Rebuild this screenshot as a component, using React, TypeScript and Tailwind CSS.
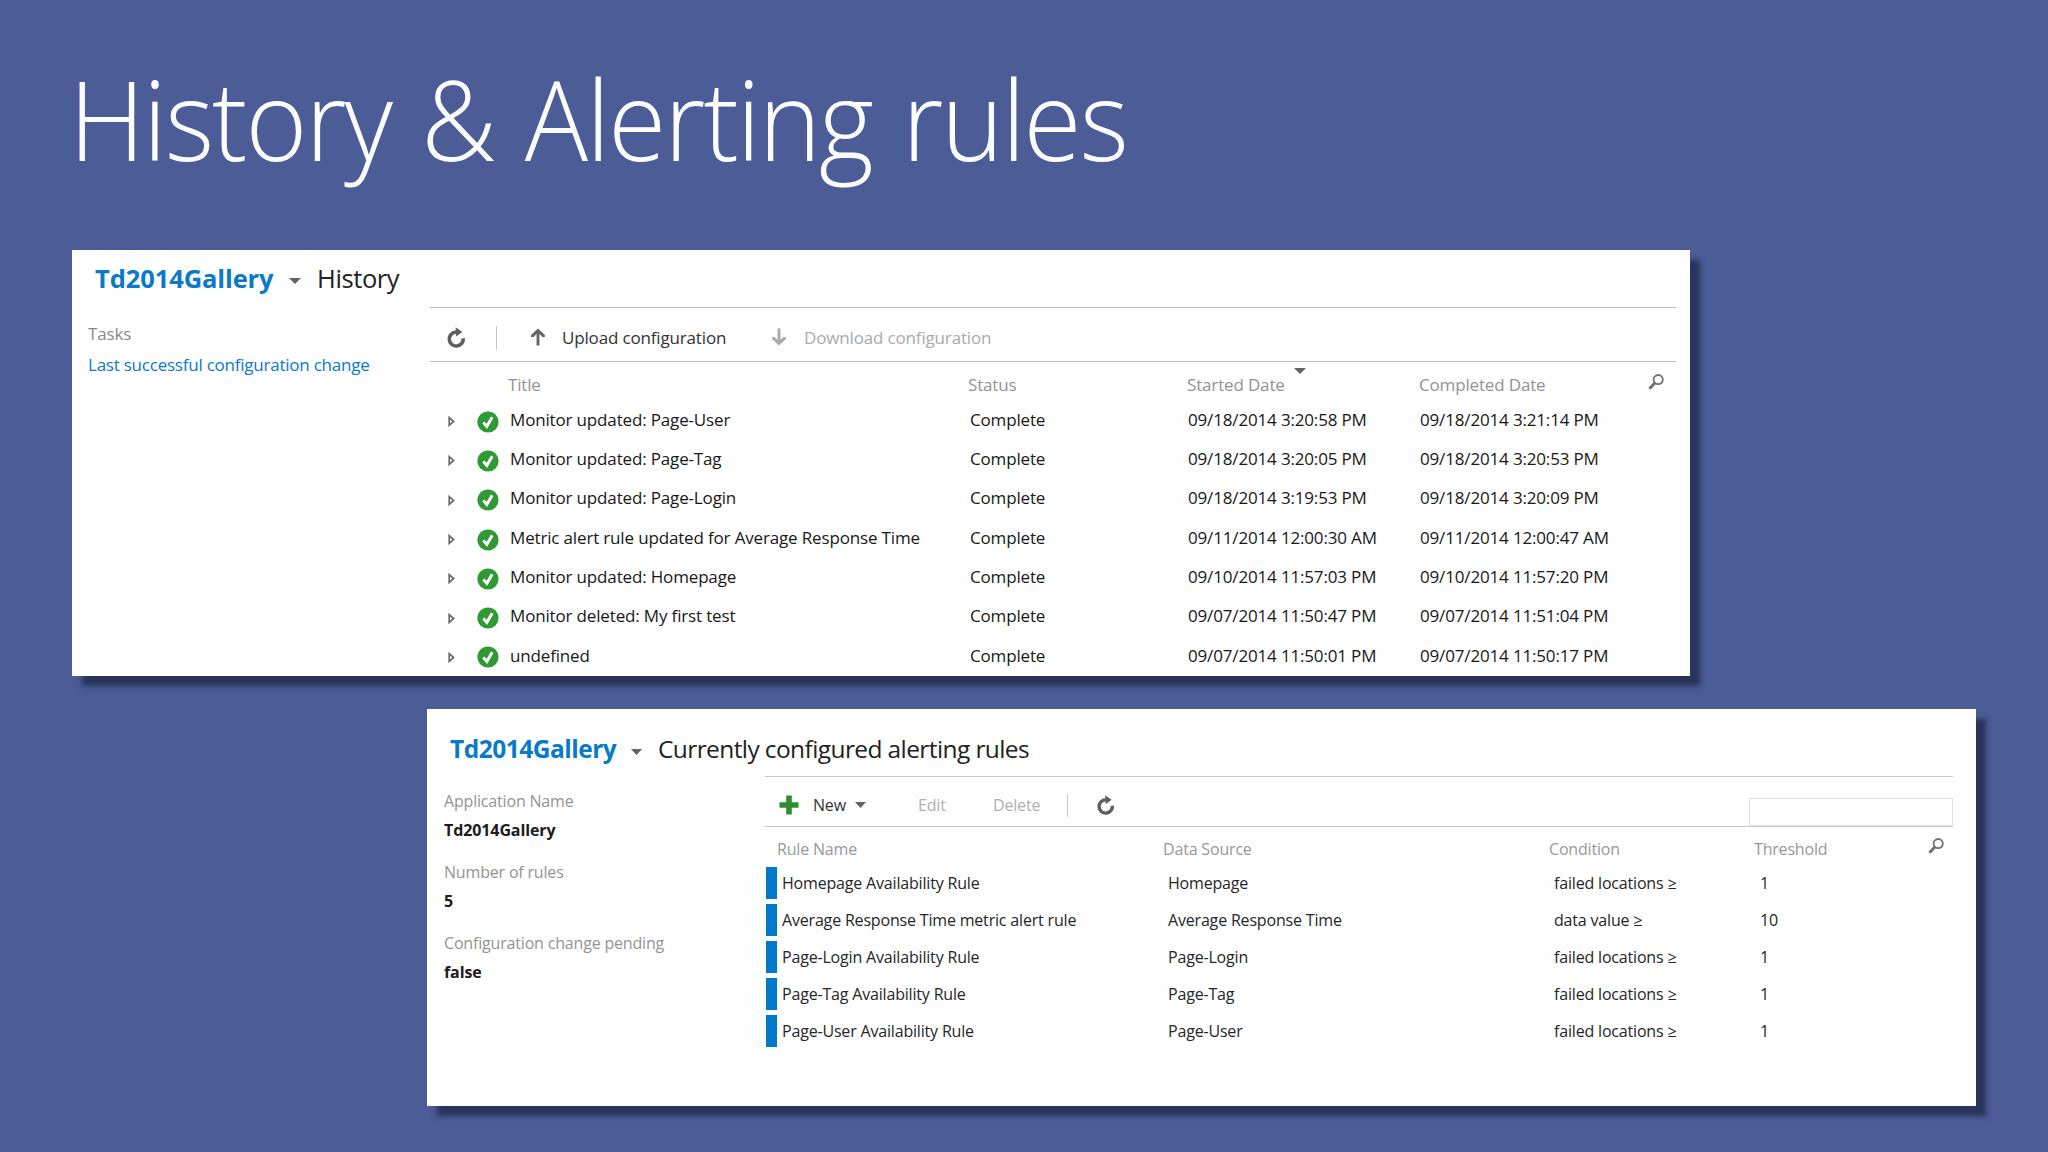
import type { ReactNode } from "react";
import clsx from "clsx";

const historyRows = [
  { title: "Monitor updated: Page-User", started: "09/18/2014 3:20:58 PM", completed: "09/18/2014 3:21:14 PM" },
  { title: "Monitor updated: Page-Tag", started: "09/18/2014 3:20:05 PM", completed: "09/18/2014 3:20:53 PM" },
  { title: "Monitor updated: Page-Login", started: "09/18/2014 3:19:53 PM", completed: "09/18/2014 3:20:09 PM" },
  { title: "Metric alert rule updated for Average Response Time", started: "09/11/2014 12:00:30 AM", completed: "09/11/2014 12:00:47 AM" },
  { title: "Monitor updated: Homepage", started: "09/10/2014 11:57:03 PM", completed: "09/10/2014 11:57:20 PM" },
  { title: "Monitor deleted: My first test", started: "09/07/2014 11:50:47 PM", completed: "09/07/2014 11:51:04 PM" },
  { title: "undefined", started: "09/07/2014 11:50:01 PM", completed: "09/07/2014 11:50:17 PM" },
];

const rules = [
  { name: "Homepage Availability Rule", source: "Homepage", condition: "failed locations ≥", threshold: "1" },
  { name: "Average Response Time metric alert rule", source: "Average Response Time", condition: "data value ≥", threshold: "10" },
  { name: "Page-Login Availability Rule", source: "Page-Login", condition: "failed locations ≥", threshold: "1" },
  { name: "Page-Tag Availability Rule", source: "Page-Tag", condition: "failed locations ≥", threshold: "1" },
  { name: "Page-User Availability Rule", source: "Page-User", condition: "failed locations ≥", threshold: "1" },
];

const summary = [
  { label: "Application Name", value: "Td2014Gallery" },
  { label: "Number of rules", value: "5" },
  { label: "Configuration change pending", value: "false" },
];

interface IconProps {
  className?: string;
}

function RefreshIcon({ className }: IconProps) {
  return (
    <svg viewBox="0 0 20 22" className={className} fill="none">
      <path d="M10.2 5A7 7 0 1 0 17.2 11.2" stroke="#5e5e5e" strokeWidth="3.6" />
      <path d="M9.6 0.2 16.4 5 10.2 9.6Z" fill="#5e5e5e" />
    </svg>
  );
}

function ArrowIcon({ className }: IconProps) {
  return (
    <svg viewBox="0 0 14 18" className={className} fill="none" stroke="currentColor">
      <path d="M7 17.5V2.5" strokeWidth="2.9" />
      <path d="M1.6 9V7.6L7 2.6l5.4 5V9" strokeWidth="3" />
    </svg>
  );
}

function SearchIcon({ className }: IconProps) {
  return (
    <svg viewBox="0 0 16 16" className={className} fill="none" stroke="#707070">
      <circle cx="10.2" cy="5.6" r="4.6" strokeWidth="1.8" />
      <path d="M6.8 9 1.4 14.8" strokeWidth="2.8" />
    </svg>
  );
}

function Caret({ className }: IconProps) {
  return (
    <svg viewBox="0 0 12 6" preserveAspectRatio="none" className={className}>
      <path d="M0 0h12L6 6z" fill="#636363" />
    </svg>
  );
}

function ExpandIcon({ className }: IconProps) {
  return (
    <svg viewBox="0 0 7 11" className={className} fill="none">
      <path d="M1.2 1.6v7.8L5.6 5.5z" stroke="#6a6a6a" strokeWidth="1.7" />
    </svg>
  );
}

function CheckIcon({ className }: IconProps) {
  return (
    <svg viewBox="0 0 22 22" className={className} fill="none">
      <circle cx="11" cy="11" r="10.6" fill="#2f9a34" />
      <path d="M6.4 11.4 9.8 15.4 15.2 6.2" stroke="#fff" strokeWidth="3" />
    </svg>
  );
}

function PlusIcon({ className }: IconProps) {
  return (
    <svg viewBox="0 0 20 20" className={className}>
      <path d="M7.2 0.5h5.6v6.7h6.7v5.6h-6.7v6.7H7.2v-6.7H0.5V7.2h6.7z" fill="#2f8d2f" />
    </svg>
  );
}

interface PanelProps {
  className: string;
  children: ReactNode;
}

function Panel({ className, children }: PanelProps) {
  return (
    <section className={clsx("bg-[#fefefe] shadow-[10px_10px_5px_0px_rgba(38,49,86,0.92)]", className)}>
      {children}
    </section>
  );
}

function HistoryPanel() {
  return (
    <Panel className="ml-[72px] h-[426px] w-[1618px] text-[17px] tracking-[-0.16px]">
      <header className="flex h-[57px] items-center pl-[23px] text-[25.5px] tracking-[-0.4px]">
        <span className="w-[194px] font-bold tracking-[-0.1px] text-[#0a7ac8]">Td2014Gallery</span>
        <Caret className="mt-1 mr-4 h-1.5 w-3" />
        <span className="text-[#222]">History</span>
      </header>

      <div className="flex">
        <aside className="w-[358px] pt-3 pl-4 leading-[30.5px]">
          <div className="text-[#8a8a8a]">Tasks</div>
          <div className="tracking-[-0.23px] text-[#0a7ac8]">Last successful configuration change</div>
        </aside>

        <div className="w-[1246px]">
          <div className="flex h-[55px] items-center border-y border-[#bcbac2] pt-1.5">
            <RefreshIcon className="ml-4 h-[22px] w-5" />
            <div className="ml-[30px] h-6 w-px bg-[#c4c4c4]" />
            <ArrowIcon className="mb-0.5 ml-[34px] h-[18px] w-3.5 text-[#666]" />
            <span className="ml-[17px] w-[210px] text-[#333]">Upload configuration</span>
            <ArrowIcon className="mb-0.5 h-[18px] w-3.5 rotate-180 text-[#aaa]" />
            <span className="ml-[18px] text-[#aaa]">Download configuration</span>
          </div>

          <div className="flex h-[39px] items-center pt-[7px] pl-[78px] text-[#939393]">
            <span className="w-[460px]">Title</span>
            <span className="w-[219px]">Status</span>
            <span className="relative w-[232px]">
              Started Date
              <Caret className="absolute -top-1 left-[107px] h-1.5 w-3" />
            </span>
            <span>Completed Date</span>
            <SearchIcon className="mr-3 mb-1.5 ml-auto h-4 w-4" />
          </div>

          {historyRows.map((row) => (
            <div key={row.started} className="flex h-[39.3px] items-center pb-0.5 text-[#181818]">
              <ExpandIcon className="mt-1 ml-[18px] h-[11px] w-[7px]" />
              <CheckIcon className="mt-1 ml-[22px] h-[22px] w-[22px]" />
              <span className="ml-[11px] w-[460px]">{row.title}</span>
              <span className="w-[218px]">Complete</span>
              <span className="w-[232px]">{row.started}</span>
              <span>{row.completed}</span>
            </div>
          ))}
        </div>
      </div>
    </Panel>
  );
}

function RulesPanel() {
  return (
    <Panel className="mt-[33px] ml-[427px] h-[397px] w-[1549px] text-[16px] tracking-[-0.18px]">
      <header className="flex h-[67px] items-center pt-3.5 pl-[23px] text-[24.5px] tracking-[-0.6px]">
        <span className="w-[181px] font-bold tracking-[-0.5px] text-[#0a7ac8]">Td2014Gallery</span>
        <Caret className="mt-1 mr-4 h-1.5 w-[11px]" />
        <span className="text-[#222]">Currently configured alerting rules</span>
      </header>

      <div className="flex">
        <aside className="w-[338px] pt-[11px] pl-[17px]">
          {summary.map((item) => (
            <div key={item.label} className="h-[71px] leading-[28.5px]">
              <div className="text-[#949494]">{item.label}</div>
              <div className="font-bold tracking-[-0.1px] text-[#1c1c1c]">{item.value}</div>
            </div>
          ))}
        </aside>

        <div className="w-[1188px]">
          <div className="flex h-[51px] items-center border-y border-[#c6c6c6] pt-[7px]">
            <PlusIcon className="ml-3.5 h-5 w-5" />
            <span className="ml-3.5 w-[42px] text-[#333]">New</span>
            <Caret className="h-1.5 w-[11px]" />
            <span className="ml-[52px] w-[75px] text-[#b0b0b0]">Edit</span>
            <span className="w-[74px] text-[#b0b0b0]">Delete</span>
            <div className="h-[23px] w-px bg-[#c8c8c8]" />
            <RefreshIcon className="ml-7 h-[21px] w-[19px]" />
            <div className="ml-auto h-7 w-[204px] self-end border border-[#e0e0e0]" />
          </div>

          <div className="flex h-[38px] items-center pt-1.5 pl-3 text-[#989898]">
            <span className="w-[386px]">Rule Name</span>
            <span className="w-[386px]">Data Source</span>
            <span className="w-[205px]">Condition</span>
            <span>Threshold</span>
            <SearchIcon className="mr-[9px] mb-1.5 ml-auto h-4 w-4" />
          </div>

          {rules.map((rule) => (
            <div key={rule.name} className="flex h-[36.9px] items-center pl-px text-[#262626]">
              <div className="h-8 w-[11px] bg-[#0078cc]" />
              <span className="mb-px ml-[5px] w-[386px]">{rule.name}</span>
              <span className="mb-px w-[386px]">{rule.source}</span>
              <span className="mb-px w-[206px]">{rule.condition}</span>
              <span className="mb-px">{rule.threshold}</span>
            </div>
          ))}
        </div>
      </div>
    </Panel>
  );
}

export default function App() {
  return (
    <main className="h-[1152px] w-[2048px] overflow-hidden bg-[#4b5c96] font-['Open_Sans','Noto_Sans',sans-serif] whitespace-nowrap">
      <h1 className="ml-[69px] h-[250px] origin-left scale-x-[0.95] pt-[42px] text-[111px] leading-[152px] font-light tracking-[-2px] text-[#fcfdff] [word-spacing:5px]">
        History &amp; Alerting rules
      </h1>
      <HistoryPanel />
      <RulesPanel />
    </main>
  );
}
